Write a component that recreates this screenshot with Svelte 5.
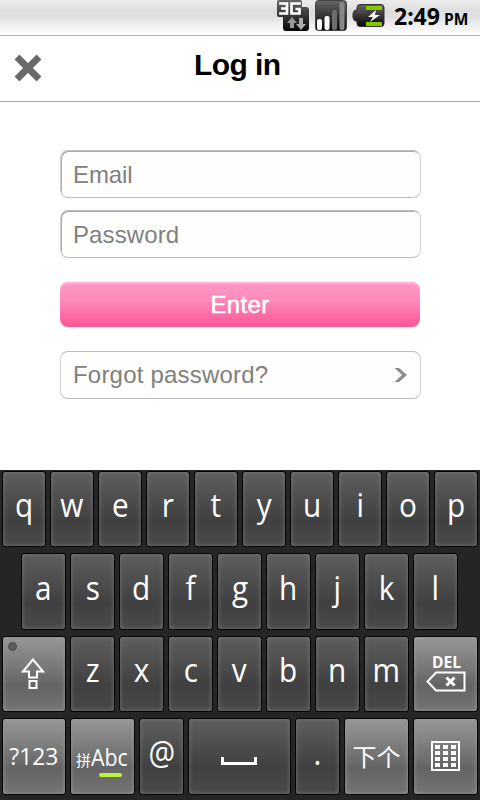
<script>
  const row1 = [...'qwertyuiop'];
  const row2 = [...'asdfghjkl'];
  const row3 = [...'zxcvbnm'];
  const cells = [0, 1, 2, 3].flatMap((r) => [0, 1, 2].map((c) => ({ x: 4 + c * 8, y: 4 + r * 6 })));
</script>

<div class="screen">
  <div class="status">
    <svg class="net" width="33" height="33" viewBox="0 0 33 33">
      <defs>
        <linearGradient id="dark" x1="0" y1="0" x2="0" y2="1">
          <stop offset="0" stop-color="#666" /><stop offset="1" stop-color="#060606" />
        </linearGradient>
      </defs>
      <path d="M3 0H24Q26 0 26 2V7H30Q33 7 33 10V28Q33 31 30 31H10Q7 31 7 28V17H3Q1 17 1 15V2Q1 0 3 0Z" fill="url(#dark)" />
      <path d="M3 3.500H11V13.500H3M5 8.500H11M25 3.500H15.500V13.500H23.500V9H19.500" fill="none" stroke="#fff" stroke-width="2.700" />
      <path d="M16 17L21 23H18V28H14V23H11Z" fill="#999" />
      <path d="M25 30L20 24H23V18H27V24H30Z" fill="#aaa" />
    </svg>
    <svg class="signal" width="33" height="33" viewBox="0 0 33 33">
      <rect x="0.500" y="0.500" width="31" height="30" rx="3" fill="url(#dark)" stroke="#444" />
      <rect x="2" y="19" width="5" height="11" rx="2" fill="#fff" />
      <rect x="9.500" y="16" width="5" height="14" rx="2" fill="#fff" />
      <rect x="17" y="10" width="5" height="20" rx="2" fill="#6e6e6e" />
      <rect x="24.500" y="2" width="5" height="28" rx="2" fill="#888" />
    </svg>
    <svg class="battery" width="33" height="25" viewBox="0 0 33 25">
      <path d="M8 0.500H29Q32 0.500 32 3.500V19.500Q32 22.500 29 22.500H8Q5 22.500 5 19.500V17.500Q1 16.500 1 13.500V9.500Q1 6.500 5 5.500V3.500Q5 0.500 8 0.500Z" fill="url(#dark)" stroke="#333" />
      <path d="M14 2H30V6H14ZM14 18H30V22H14Z" fill="#84c400" />
      <path d="M24 6L16 13H21L18 18L28 11H23Z" fill="#fff" />
    </svg>
    <span class="time">2:49</span><span class="pm">PM</span>
  </div>

  <header>
    <svg class="close" width="28" height="28" viewBox="0 0 28 28">
      <path d="M3 3L25 25M25 3L3 25" stroke="#6a6a6a" stroke-width="6.800" />
    </svg>
    <h1>Log in</h1>
  </header>

  <main>
    <div class="field inset">Email</div>
    <div class="field inset second">Password</div>
    <div class="enter">Enter</div>
    <div class="field forgot">
      <span>Forgot password?</span>
      <svg width="14" height="16" viewBox="0 0 14 16">
        <path d="M0.500 1H5L13 8L5 15H0.500L8 8Z" fill="#8c8c8c" />
      </svg>
    </div>
  </main>

  <div class="keyboard">
    <div class="row">
      {#each row1 as k}<div class="key w44"><span>{k}</span></div>{/each}
    </div>
    <div class="row tall indent">
      {#each row2 as k}<div class="key w45"><span>{k}</span></div>{/each}
    </div>
    <div class="row">
      <div class="key light w64">
        <i class="led"></i>
        <svg class="shift" width="24" height="33" viewBox="0 0 24 33">
          <path d="M12 2.500L2 14.500H8V20.500H16V14.500H22ZM8.500 24H15.500V31H8.500Z" fill="none" stroke="#fff" stroke-width="2" />
        </svg>
      </div>
      {#each row3 as k}<div class="key w45"><span>{k}</span></div>{/each}
      <div class="key light w65 del">
        <b>DEL</b>
        <svg width="40" height="21" viewBox="0 0 40 21">
          <path d="M10 1.500H38.500V19.500H10L1.500 10.500Z" fill="none" stroke="#fff" stroke-width="2" />
          <path d="M20.500 6.500L28.500 14.500M28.500 6.500L20.500 14.500" stroke="#fff" stroke-width="3" />
        </svg>
      </div>
    </div>
    <div class="row tall">
      <div class="key light w64 num"><span>?123</span></div>
      <div class="key light w65 mode">
        <div class="lang"><small>拼</small><span>Abc</span></div>
        <i class="bar"></i>
      </div>
      <div class="key w45"><span>@</span></div>
      <div class="key space">
        <svg width="36" height="8" viewBox="0 0 36 8"><path d="M1.500 0V6.500H34.500V0" fill="none" stroke="#fff" stroke-width="3" /></svg>
      </div>
      <div class="key w45"><span>.</span></div>
      <div class="key light w65 next"><span>下个</span></div>
      <div class="key light w65 grid">
        <svg width="29" height="30" viewBox="0 0 29 30">
          <rect x="1" y="1" width="27" height="28" fill="none" stroke="#fff" stroke-width="2" />
          {#each cells as c}<rect x={c.x} y={c.y} width="5" height="4" fill="#fff" />{/each}
        </svg>
      </div>
    </div>
  </div>
</div>

<style>
  :global(body) { margin: 0; background: #fff; }
  .screen {
    width: 480px; height: 800px; overflow: hidden;
    display: flex; flex-direction: column;
    font-family: "Liberation Sans", Arial, sans-serif;
  }
  .status {
    box-sizing: border-box; height: 36px; flex: none;
    display: flex; align-items: flex-start;
    padding-left: 276px; border-bottom: 1px solid #b5b5b5;
    background: linear-gradient(#ededed, #dedede 30%, #e0e0e0 50%, #f4f4f4 80%, #fdfdfd);
    font-family: "Noto Sans", "Open Sans", sans-serif; font-weight: 700; color: #000;
  }
  .signal { margin-left: 6px; }
  .battery { margin: 4px 0 0 4px; }
  .time { font-size: 23px; line-height: 33px; margin-left: 9px; width: 50px; white-space: nowrap; }
  .pm { font-size: 15.500px; line-height: 38px; font-weight: 700; font-family: "Open Sans", "Noto Sans", sans-serif; }
  header {
    box-sizing: border-box; height: 66px; flex: none;
    display: flex; align-items: flex-start;
    border-bottom: 1px solid #e783ae;
  }
  .close { margin: 18px 0 0 13.500px; }
  h1 { margin: 11px 0 0 152.500px; font-size: 30px; line-height: 36px; font-weight: 700; letter-spacing: -0.6px; color: #000; white-space: nowrap; }
  main { height: 368px; flex: none; box-sizing: border-box; padding: 48px 59px 0 60px; display: flex; flex-direction: column; }
  .field {
    box-sizing: border-box; height: 48px; flex: none;
    border: 1px solid #bebebe; border-left-color: #d0d0d0; border-right-color: #d0d0d0; border-radius: 8px;
    background: #fefefc; color: #808080;
    font-size: 24px; line-height: 48px; padding-left: 12px; white-space: nowrap;
    letter-spacing: 0.2px;
  }
  .inset { box-shadow: inset 1px 1px 0 #a8a8a8; border-left-color: #d0d0d0; letter-spacing: -0.1px; }
  .second { margin-top: 12px; letter-spacing: 0.1px; }
  .enter {
    width: 360px; height: 45px; flex: none; margin: 24px 0; border-radius: 8px;
    background: linear-gradient(#ff98c6, #fc8abb 40%, #fb5595);
    box-shadow: inset 0 2px 1px #ffb3d5;
    color: #fff; text-align: center; font-size: 24px; line-height: 46px; letter-spacing: 0.300px; -webkit-text-stroke: 0.5px #fff;
  }
  .forgot { display: flex; justify-content: space-between; align-items: center; padding-right: 12px; }
  .forgot span { line-height: 50px; }
  .forgot svg { margin-top: -1px; }
  .keyboard {
    height: 330px; flex: none; box-sizing: border-box; padding: 1px 2px 0;
    display: flex; flex-direction: column; gap: 6px;
    background: #242524;
    font-family: "Open Sans", "Noto Sans", sans-serif; color: #fff;
  }
  .row { display: flex; flex: none; gap: 4px; height: 76px; }
  .row.tall { height: 77px; }
  .row.tall .key { line-height: 68px; }
  .indent { padding-left: 19px; }
  .key {
    box-sizing: border-box; flex: none; position: relative;
    border: 1px solid #050505; border-radius: 3px;
    background: linear-gradient(#5e5e5e, #494949 45%, #404040 65%, #494949);
    box-shadow: inset 0 0 5px #747474;
    display: flex; justify-content: center; font-size: 33px; line-height: 66px;
  }
  .key span { display: block; transform: scaleX(0.9); white-space: nowrap; }
  .key.light { background: linear-gradient(#979797, #757575 45%, #646464 65%, #737373); box-shadow: inset 0 0 5px #979797; }
  .w44 { width: 44px; }
  .w45 { width: 45px; }
  .w64 { width: 64px; }
  .w65 { width: 65px; }
  .space { width: 103px; align-items: flex-start; }
  .space svg { margin-top: 38px; margin-right: 2px; }
  .led { position: absolute; left: 5px; top: 5px; width: 7px; height: 7px; border-radius: 50%; background: #5c5c5c; border: 1px solid #484848; }
  .shift { margin: 20px 2px 0 0; }
  .del { flex-direction: column; justify-content: flex-start; align-items: center; }
  .del b { font-size: 15.500px; line-height: 16px; margin-top: 17px; padding-left: 2px; font-weight: 700; }
  .del svg { margin-top: 1px; }
  .row.tall .num { font-size: 24px; line-height: 74px; }
  .key.num span { transform: scaleX(0.95); }
  .mode { flex-direction: column; align-items: center; justify-content: flex-start; }
  .row.tall .lang { display: flex; align-items: baseline; font-size: 24px; line-height: 75px; height: 54px; }
  .lang small { font-family: "Noto Sans CJK SC", sans-serif; font-size: 15px; font-weight: 400; line-height: 20px; margin-left: -1px; }
  .key .lang span { transform: scaleX(0.89); transform-origin: 0 0; width: 37px; }
  .bar { width: 23px; height: 4px; border-radius: 2px; background: #b8f53e; margin-left: 15px; }
  .row.tall .next { font-family: "Noto Sans CJK SC", sans-serif; font-size: 24px; line-height: 73px; font-weight: 400; }
  .key.next span { transform: none; }
  .grid { align-items: flex-start; }
  .grid svg { margin-top: 22px; }
</style>
